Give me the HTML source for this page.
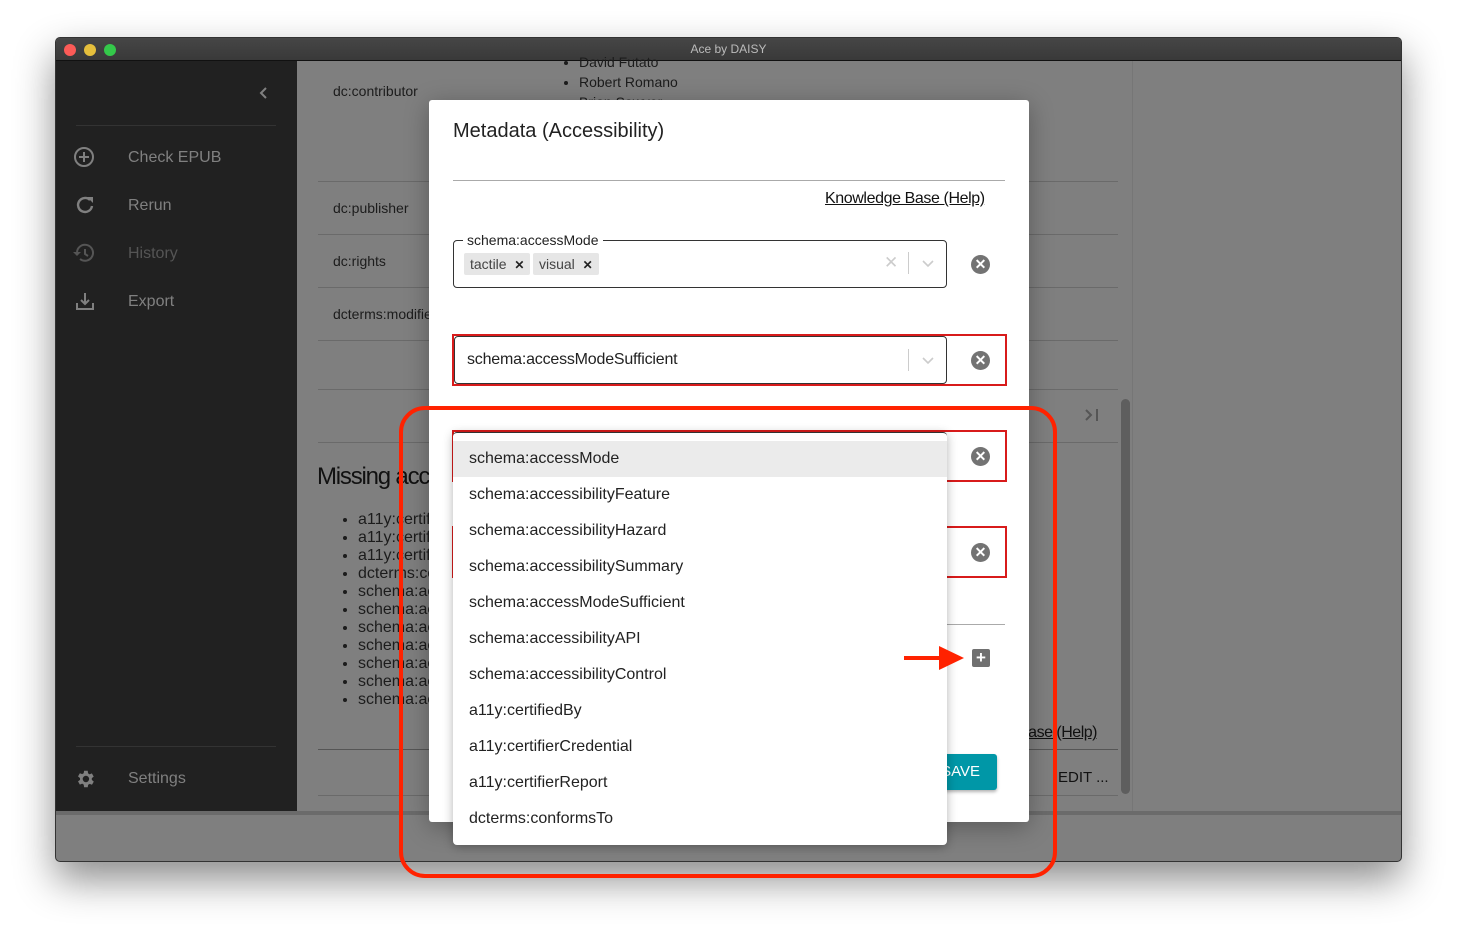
<!DOCTYPE html>
<html><head><meta charset="utf-8"><style>
*{box-sizing:border-box;margin:0;padding:0}
body{width:1457px;height:935px;background:#fff;font-family:"Liberation Sans",sans-serif;position:relative;overflow:hidden}
.a{position:absolute}
.win{left:55px;top:37px;width:1347px;height:825px;border-radius:5px;overflow:hidden;box-shadow:0 18px 40px rgba(0,0,0,.45);border:1px solid #333;background:#7f7f7f}
.title{left:0;top:0;width:100%;height:23px;background:linear-gradient(#464646,#393939);border-bottom:1px solid #111;color:#bbb;font-size:12px;text-align:center;line-height:23px}
.dot{top:6px;width:12px;height:12px;border-radius:50%}
.side{left:0;top:23px;width:241px;height:750px;background:#212121;color:#808080;font-size:16px}
.side .it{position:absolute;left:72px}
.hl{height:1px;background:#6a6a6a;left:262px;width:800px}
.c{color:#1c1c1c;font-size:14px}
ul.c{list-style:disc;padding-left:20px}
.modal{left:429px;top:100px;width:600px;height:722px;background:#fff;border-radius:3px;box-shadow:0 5px 25px rgba(0,0,0,.3)}
.red{border:2px solid #d81b1b}
.xc{width:19px;height:19px;border-radius:50%;background:#737373;color:#fff;font-size:14px;line-height:19px;text-align:center;font-weight:bold}
.menu{left:453px;top:432px;width:494px;height:413px;background:#fff;border-radius:4px;box-shadow:0 2px 10px rgba(0,0,0,.3);border-top:1px solid #333}
.menu div{height:36px;line-height:36px;padding-left:16px;font-size:16px;color:#222}
</style></head><body>
<div class="a win">
 <div class="a title">Ace by DAISY</div>
 <div class="a dot" style="left:8px;background:#fc5b57"></div>
 <div class="a dot" style="left:28px;background:#e5bf3c"></div>
 <div class="a dot" style="left:48px;background:#34c84a"></div>
 <div class="a side">
  <svg class="a" style="left:203px;top:25px" width="10" height="14"><path d="M7 2L2 7l5 5" fill="none" stroke="#808080" stroke-width="2"/></svg>
  <div class="a" style="left:20px;top:64px;width:200px;height:1px;background:#333"></div>
  <svg class="a" style="left:17px;top:85px" width="22" height="22"><circle cx="11" cy="11" r="9" fill="none" stroke="#808080" stroke-width="2"/><path d="M11 6v10M6 11h10" stroke="#808080" stroke-width="2"/></svg>
  <div class="it" style="top:88px">Check EPUB</div>
  <svg class="a" style="left:19px;top:134px" width="20" height="20"><path d="M15 5A7 7 0 1 0 17 11" fill="none" stroke="#808080" stroke-width="2.4"/><path d="M12 2h6v6z" fill="#808080"/></svg>
  <div class="it" style="top:136px">Rerun</div>
  <svg class="a" style="left:17px;top:182px" width="22" height="20"><path d="M4 10A8 8 0 1 1 7 16" fill="none" stroke="#555" stroke-width="2"/><path d="M12 6v5l3 2" fill="none" stroke="#555" stroke-width="2"/><path d="M0 9h8l-4 4z" fill="#555"/></svg>
  <div class="it" style="top:184px;color:#555">History</div>
  <svg class="a" style="left:19px;top:230px" width="20" height="20"><path d="M2 12v6h16v-6M10 2v11M6 9l4 4 4-4" fill="none" stroke="#808080" stroke-width="2"/></svg>
  <div class="it" style="top:232px">Export</div>
  <div class="a" style="left:20px;top:685px;width:200px;height:1px;background:#333"></div>
  <svg class="a" style="left:18px;top:707px" width="22" height="22" viewBox="0 0 24 24"><path fill="#808080" d="M19.4 13a7.5 7.5 0 0 0 0-2l2.1-1.6-2-3.5-2.5 1a7 7 0 0 0-1.7-1L15 3h-4l-.4 2.7a7 7 0 0 0-1.7 1l-2.5-1-2 3.5L6.6 11a7.5 7.5 0 0 0 0 2l-2.2 1.6 2 3.5 2.5-1a7 7 0 0 0 1.7 1L11 21h4l.4-2.7a7 7 0 0 0 1.7-1l2.5 1 2-3.5zM13 15.5a3.5 3.5 0 1 1 0-7 3.5 3.5 0 0 1 0 7z"/></svg>
  <div class="it" style="top:709px">Settings</div>
 </div>
 <div class="a" style="left:0;top:773px;width:100%;height:4px;background:#6b6b6b"></div>
 <div class="a" style="left:1076px;top:23px;width:1px;height:750px;background:#767676"></div>
 <div class="a" style="left:1065px;top:361px;width:9px;height:395px;border-radius:5px;background:#5e5e5e"></div>
 <ul class="a c" style="left:503px;top:14px;line-height:20px"><li>David Futato</li><li>Robert Romano</li><li>Brian Sawyer</li></ul>
 <div class="a c" style="left:277px;top:45px">dc:contributor</div>
 <div class="a hl" style="top:143px"></div>
 <div class="a c" style="left:277px;top:162px">dc:publisher</div>
 <div class="a hl" style="top:196px"></div>
 <div class="a c" style="left:277px;top:215px">dc:rights</div>
 <div class="a hl" style="top:249px"></div>
 <div class="a c" style="left:277px;top:268px">dcterms:modified</div>
 <div class="a hl" style="top:302px"></div>
 <div class="a hl" style="top:351px"></div>
 <div class="a hl" style="top:404px"></div>
 <svg class="a" style="left:1028px;top:370px" width="16" height="14"><path d="M2 2l5 5-5 5M13 1v12" fill="none" stroke="#555" stroke-width="2"/></svg>
 <div class="a" style="left:261px;top:425px;font-size:24px;color:#111;letter-spacing:-1.2px">Missing accessibility metadata</div>
 <ul class="a c" style="left:282px;top:473px;font-size:16px;line-height:18px"><li>a11y:certifiedBy</li><li>a11y:certifierCredential</li><li>a11y:certifierReport</li><li>dcterms:conformsTo</li><li>schema:accessMode</li><li>schema:accessMode</li><li>schema:accessMode</li><li>schema:accessMode</li><li>schema:accessMode</li><li>schema:accessMode</li><li>schema:accessMode</li></ul>
 <div class="a" style="left:262px;top:711px;width:800px;height:1px;background:#555"></div>
 <div class="a" style="left:262px;top:757px;width:800px;height:1px;background:#6a6a6a"></div>
 <div class="a" style="left:962px;top:686px;font-size:16px;color:#111;text-decoration:underline;letter-spacing:-0.5px">Base (Help)</div>
 <div class="a" style="left:1002px;top:731px;font-size:15px;color:#111">EDIT ...</div>
</div>

<div class="a modal">
 <div class="a" style="left:24px;top:20px;font-size:20px;color:#222">Metadata (Accessibility)</div>
 <div class="a" style="left:24px;top:80px;width:552px;height:1px;background:#aaa"></div>
 <div class="a" style="left:396px;top:90px;font-size:16px;color:#111;text-decoration:underline;letter-spacing:-0.4px">Knowledge Base (Help)</div>
 <div class="a" style="left:24px;top:140px;width:494px;height:48px;border:1px solid #333;border-radius:4px"></div>
 <div class="a" style="left:34px;top:132px;background:#fff;padding:0 4px;font-size:14px;color:#222">schema:accessMode</div>
 <div class="a" style="left:35px;top:153px;height:22px;background:#e6e6e6;border-radius:2px;padding:0 6px;font-size:14px;line-height:22px;color:#444">tactile &nbsp;<b style="color:#222;font-size:12px">✕</b></div>
 <div class="a" style="left:104px;top:153px;height:22px;background:#e6e6e6;border-radius:2px;padding:0 6px;font-size:14px;line-height:22px;color:#444">visual &nbsp;<b style="color:#222;font-size:12px">✕</b></div>
 <div class="a" style="left:455px;top:153px;color:#ccc;font-size:17px">✕</div>
 <div class="a" style="left:479px;top:152px;width:1px;height:22px;background:#ccc"></div>
 <svg class="a" style="left:492px;top:159px" width="14" height="9"><path d="M2 2l5 5 5-5" fill="none" stroke="#ccc" stroke-width="1.6"/></svg>
 <div class="a xc" style="left:542px;top:155px">✕</div>

 <div class="a red" style="left:23px;top:234px;width:555px;height:52px"></div>
 <div class="a" style="left:25px;top:236px;width:493px;height:48px;border:1px solid #333;border-radius:4px"></div>
 <div class="a" style="left:38px;top:251px;font-size:16px;color:#222;letter-spacing:-0.2px">schema:accessModeSufficient</div>
 <div class="a" style="left:479px;top:249px;width:1px;height:22px;background:#ccc"></div>
 <svg class="a" style="left:492px;top:256px" width="14" height="9"><path d="M2 2l5 5 5-5" fill="none" stroke="#ccc" stroke-width="1.6"/></svg>
 <div class="a xc" style="left:542px;top:251px">✕</div>

 <div class="a red" style="left:23px;top:330px;width:555px;height:52px"></div>
 <div class="a xc" style="left:542px;top:347px">✕</div>
 <div class="a red" style="left:23px;top:426px;width:555px;height:52px"></div>
 <div class="a xc" style="left:542px;top:443px">✕</div>
 <div class="a" style="left:24px;top:524px;width:552px;height:1px;background:#aaa"></div>
 <div class="a" style="left:543px;top:549px;width:18px;height:18px;background:#707070;border-radius:2px;color:#fff;font-size:17px;line-height:18px;text-align:center;font-weight:bold">+</div>
 <div class="a" style="left:480px;top:654px;width:88px;height:36px;background:#0097a7;border-radius:3px;color:#fff;font-size:15px;line-height:36px;text-align:right;padding-right:17px;box-shadow:0 2px 3px rgba(0,0,0,.3)">SAVE</div>
</div>

<div class="a menu">
 <div style="background:#ebebeb;margin-top:8px">schema:accessMode</div>
 <div>schema:accessibilityFeature</div>
 <div>schema:accessibilityHazard</div>
 <div>schema:accessibilitySummary</div>
 <div>schema:accessModeSufficient</div>
 <div>schema:accessibilityAPI</div>
 <div>schema:accessibilityControl</div>
 <div>a11y:certifiedBy</div>
 <div>a11y:certifierCredential</div>
 <div>a11y:certifierReport</div>
 <div>dcterms:conformsTo</div>
</div>
<div class="a" style="left:904px;top:656px;width:36px;height:4px;background:#ff2200"></div>
<div class="a" style="left:939px;top:646px;width:0;height:0;border-top:12px solid transparent;border-bottom:12px solid transparent;border-left:25px solid #ff2200"></div>
<div class="a" style="left:399px;top:406px;width:658px;height:472px;border:4px solid #ff2200;border-radius:26px"></div>
</body></html>
